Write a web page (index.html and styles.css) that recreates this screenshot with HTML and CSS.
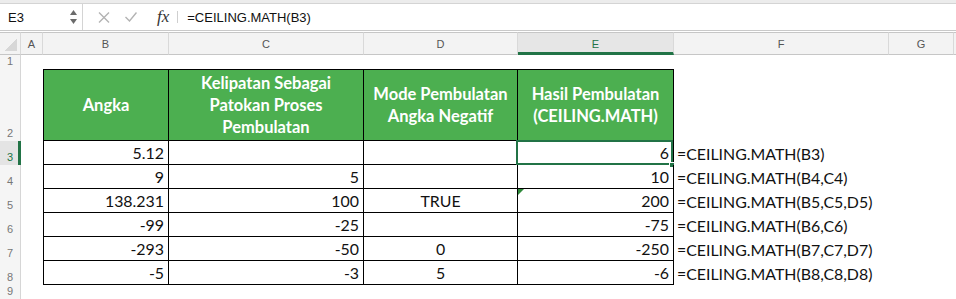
FILE: index.html
```html
<!DOCTYPE html>
<html lang="id">

<head>
    <meta charset="UTF-8">
    <meta name="viewport" content="width=device-width, initial-scale=1.0">
    <title>CEILING.MATH</title>

    <link rel="stylesheet" href="styles.css">
</head>

<body>
    <div class="formula-bar">
        <div class="name-box">
            <span>E3</span>
            <svg class="stepper" width="7" height="18" viewBox="0 0 7 18">
                <path d="M3.5 2 L7 7 L0 7 Z" fill="#6b6b6b"/>
                <path d="M0 11 L7 11 L3.5 16 Z" fill="#6b6b6b"/>
            </svg>
        </div>
        <div class="fb-icons">
            <svg width="12" height="11" viewBox="0 0 12 11">
                <path d="M1 0.5 L11 10.5 M11 0.5 L1 10.5" stroke="#b3b3b3" stroke-width="1.4" fill="none"/>
            </svg>
            <svg width="12" height="10" viewBox="0 0 12 10">
                <path d="M0.5 5 L4.5 9 L11.5 0.5" stroke="#b3b3b3" stroke-width="1.4" fill="none"/>
            </svg>
            <span class="fx">fx</span>
        </div>
        <div class="formula">=CEILING.MATH(B3)</div>
    </div>

    <div class="sheet">
        <!-- column headers -->
        <div class="ch corner"><span class="tri"></span></div>
        <div class="ch">A</div>
        <div class="ch">B</div>
        <div class="ch">C</div>
        <div class="ch">D</div>
        <div class="ch active">E</div>
        <div class="ch">F</div>
        <div class="ch">G</div>
        <div class="ch rest"></div>

        <!-- row 1 -->
        <div class="rh">1</div>
        <div></div><div></div><div></div><div></div><div></div><div></div><div></div><div></div>

        <!-- row 2 -->
        <div class="rh">2</div>
        <div></div>
        <div class="t th first">Angka</div>
        <div class="t th">Kelipatan Sebagai<br>Patokan Proses<br>Pembulatan</div>
        <div class="t th">Mode Pembulatan<br>Angka Negatif</div>
        <div class="t th">Hasil Pembulatan<br>(CEILING.MATH)</div>
        <div></div><div></div><div></div>

        <!-- row 3 -->
        <div class="rh active">3</div>
        <div></div>
        <div class="t first num">5.12</div>
        <div class="t num"></div>
        <div class="t mid"></div>
        <div class="t num sel-cell">6<span class="sel"></span><span class="handle"></span></div>
        <div class="f">=CEILING.MATH(B3)</div>
        <div></div><div></div>

        <!-- row 4 -->
        <div class="rh">4</div>
        <div></div>
        <div class="t first num">9</div>
        <div class="t num">5</div>
        <div class="t mid"></div>
        <div class="t num">10</div>
        <div class="f">=CEILING.MATH(B4,C4)</div>
        <div></div><div></div>

        <!-- row 5 -->
        <div class="rh">5</div>
        <div></div>
        <div class="t first num">138.231</div>
        <div class="t num">100</div>
        <div class="t mid">TRUE</div>
        <div class="t num flagged">200<span class="err"></span></div>
        <div class="f">=CEILING.MATH(B5,C5,D5)</div>
        <div></div><div></div>

        <!-- row 6 -->
        <div class="rh">6</div>
        <div></div>
        <div class="t first num">-99</div>
        <div class="t num">-25</div>
        <div class="t mid"></div>
        <div class="t num">-75</div>
        <div class="f">=CEILING.MATH(B6,C6)</div>
        <div></div><div></div>

        <!-- row 7 -->
        <div class="rh">7</div>
        <div></div>
        <div class="t first num">-293</div>
        <div class="t num">-50</div>
        <div class="t mid">0</div>
        <div class="t num">-250</div>
        <div class="f">=CEILING.MATH(B7,C7,D7)</div>
        <div></div><div></div>

        <!-- row 8 -->
        <div class="rh">8</div>
        <div></div>
        <div class="t first num">-5</div>
        <div class="t num">-3</div>
        <div class="t mid">5</div>
        <div class="t num">-6</div>
        <div class="f">=CEILING.MATH(B8,C8,D8)</div>
        <div></div><div></div>

        <!-- row 9 -->
        <div class="rh">9</div>
        <div></div><div></div><div></div><div></div><div></div><div></div><div></div><div></div>
    </div>
</body>

</html>
```

FILE: styles.css
```css
* {
    box-sizing: border-box;
}

body {
    margin: 0;
    background: #fff;
    overflow: hidden;
}

/* formula bar */
.formula-bar {
    height: 31px;
    display: flex;
    align-items: stretch;
    border-top: 3px solid #ececec;
    border-bottom: 1px solid #c9c9c9;
    font-family: "Liberation Sans", Arial, sans-serif;
    font-size: 13px;
    color: #111;
    margin-bottom: 1px;
}

.name-box {
    width: 83px;
    display: flex;
    align-items: center;
    justify-content: space-between;
    padding: 0 5px 0 8px;
    border-right: 1px solid #d4d4d4;
    border-top: 1px solid #d4d4d4;
}

.fb-icons {
    display: flex;
    align-items: center;
    gap: 15px;
    padding-left: 15px;
    padding-right: 8px;
    border-top: 1px solid #d4d4d4;
}

.fx {
    font-family: "Liberation Serif", "Times New Roman", serif;
    font-style: italic;
    font-size: 17px;
    color: #333;
    padding-right: 8px;
    border-right: 1px solid #cfcfcf;
    line-height: 12px;
    margin-left: 5px;
}

.formula {
    flex: 1;
    display: flex;
    align-items: center;
    border-top: 1px solid #d4d4d4;
    padding-left: 1px;
}

/* grid */
.sheet {
    display: grid;
    grid-template-columns: 21px 22px 126px 195px 154px 156px 215px 65px 1fr;
    grid-template-rows: 23px 14px 72px repeat(6, 24px) 1fr;
    height: 267px;
    font-family: Lato, "Liberation Sans", sans-serif;
    font-size: 15.9px;
    color: #111;
}

.ch {
    background: #f3f3f3;
    border-top: 1px solid #c6c6c6;
    border-bottom: 1px solid #c6c6c6;
    border-right: 1px solid #d9d9d9;
    display: flex;
    align-items: center;
    justify-content: center;
    font-family: "Liberation Sans", Arial, sans-serif;
    font-size: 11px;
    color: #555;
}

.ch.active {
    background: #e6e6e6;
    color: #217346;
    border-bottom: 3px solid #217346;
    padding-top: 2px;
}

.ch.rest {
    border-right: none;
}

.corner {
    position: relative;
}

.tri {
    position: absolute;
    right: 3px;
    bottom: 3px;
    width: 13px;
    height: 13px;
    background: linear-gradient(to bottom right, transparent 50%, #d7d7d7 50%);
}

.rh {
    background: #f5f5f5;
    border-right: 1px solid #d6d6d6;
    display: flex;
    align-items: flex-end;
    justify-content: center;
    padding-bottom: 2px;
    font-family: "Liberation Sans", Arial, sans-serif;
    font-size: 11px;
    color: #777;
}

.rh.active {
    background: #e4e4e4;
    color: #217346;
    border-right: 3px solid #217346;
    padding-left: 2px;
}

/* table */
.t {
    border-right: 1px solid #000;
    border-bottom: 1px solid #000;
    display: flex;
    align-items: center;
    position: relative;
}

.t.first {
    border-left: 1px solid #000;
}

.th {
    border-top: 1px solid #000;
    background: #4caf50;
    color: #fff;
    font-weight: 700;
    font-size: 16.5px;
    line-height: 22px;
    justify-content: center;
    text-align: center;
}

.num {
    justify-content: flex-end;
    padding-right: 4px;
}

.mid {
    justify-content: center;
}

.f {
    display: flex;
    align-items: center;
    padding-left: 3px;
    white-space: nowrap;
}

/* selection */
.sel {
    position: absolute;
    left: -2px;
    top: -1px;
    right: 0;
    bottom: -1px;
    border: 2px solid #217346;
}

.handle {
    position: absolute;
    left: 151px;
    top: 21px;
    width: 6px;
    height: 6px;
    background: #217346;
    border: 1px solid #fff;
}

.err {
    position: absolute;
    left: 0;
    top: 0;
    width: 0;
    height: 0;
    border-top: 6px solid #2f8a3a;
    border-right: 6px solid transparent;
}
```
